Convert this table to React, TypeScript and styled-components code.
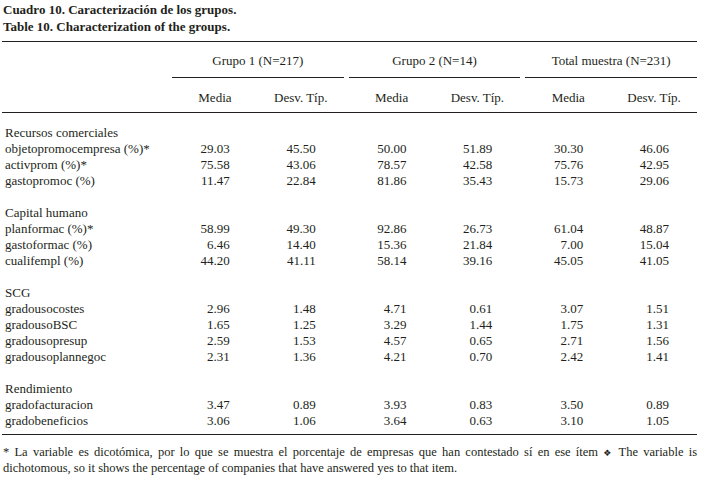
import React from "react";
import styled, { createGlobalStyle } from "styled-components";

const Global = createGlobalStyle`
  html, body { margin: 0; padding: 0; background: #ffffff; }
  body {
    font-family: "Liberation Serif", "Times New Roman", serif;
    color: #231f20;
  }
`;

const Page = styled.div`
  width: 701px;
  box-sizing: border-box;
  padding: 2px 4px 0 2px;
`;

const Title = styled.div`
  font-weight: bold;
  font-size: 13px;
  line-height: 16.5px;
  padding-left: 1px;
`;

const Table = styled.div`
  margin-top: 6px;
  border-top: 1px solid #231f20;
  border-bottom: 1px solid #231f20;
  font-size: 13px;
`;

const Row = styled.div<{ $rule?: boolean }>`
  display: grid;
  grid-template-columns: 165px repeat(3, 1fr);
  column-gap: 5px;
  border-bottom: ${(p) => (p.$rule ? "1px solid #231f20" : "none")};
`;

const GroupHead = styled.div`
  text-align: center;
  line-height: 16px;
  padding: 11px 0 8px;
  border-bottom: 1px solid #231f20;
`;

const Pair = styled.div`
  display: grid;
  grid-template-columns: 1fr 1fr;
`;

const SubHead = styled.div`
  text-align: center;
  line-height: 16px;
  padding: 12px 0 6px;
`;

const Body = styled.div`
  padding: 12px 0 5px;
`;

const Section = styled.div`
  & + & {
    margin-top: 16px;
  }
`;

const DataRow = styled.div`
  display: grid;
  grid-template-columns: 165px repeat(3, 1fr);
  column-gap: 5px;
  line-height: 16px;
`;

const Label = styled.div`
  padding-left: 3px;
  white-space: nowrap;
`;

const Num = styled.div`
  text-align: right;
  padding-right: 28px;
`;

const Foot = styled.div`
  font-size: 12.5px;
  line-height: 15px;
  padding: 10px 0 0 1px;
`;

const FootLine = styled.div<{ $full?: boolean }>`
  text-align: ${(p) => (p.$full ? "justify" : "left")};
  text-align-last: ${(p) => (p.$full ? "justify" : "auto")};
  white-space: nowrap;
`;

const Orn = styled.span`
  font-family: "DejaVu Sans", sans-serif;
  font-size: 9px;
`;

type Item = { name: string; v: string[] };
type Group = { title: string; items: Item[] };

const groups: Group[] = [
  {
    title: "Recursos comerciales",
    items: [
      { name: "objetopromocempresa (%)*", v: ["29.03", "45.50", "50.00", "51.89", "30.30", "46.06"] },
      { name: "activprom (%)*", v: ["75.58", "43.06", "78.57", "42.58", "75.76", "42.95"] },
      { name: "gastopromoc (%)", v: ["11.47", "22.84", "81.86", "35.43", "15.73", "29.06"] },
    ],
  },
  {
    title: "Capital humano",
    items: [
      { name: "planformac (%)*", v: ["58.99", "49.30", "92.86", "26.73", "61.04", "48.87"] },
      { name: "gastoformac (%)", v: ["6.46", "14.40", "15.36", "21.84", "7.00", "15.04"] },
      { name: "cualifempl (%)", v: ["44.20", "41.11", "58.14", "39.16", "45.05", "41.05"] },
    ],
  },
  {
    title: "SCG",
    items: [
      { name: "gradousocostes", v: ["2.96", "1.48", "4.71", "0.61", "3.07", "1.51"] },
      { name: "gradousoBSC", v: ["1.65", "1.25", "3.29", "1.44", "1.75", "1.31"] },
      { name: "gradousopresup", v: ["2.59", "1.53", "4.57", "0.65", "2.71", "1.56"] },
      { name: "gradousoplannegoc", v: ["2.31", "1.36", "4.21", "0.70", "2.42", "1.41"] },
    ],
  },
  {
    title: "Rendimiento",
    items: [
      { name: "gradofacturacion", v: ["3.47", "0.89", "3.93", "0.83", "3.50", "0.89"] },
      { name: "gradobeneficios", v: ["3.06", "1.06", "3.64", "0.63", "3.10", "1.05"] },
    ],
  },
];

const heads = ["Grupo 1 (N=217)", "Grupo 2 (N=14)", "Total muestra (N=231)"];

export default function App() {
  return (
    <Page>
      <Global />
      <Title>
        Cuadro 10. Caracterización de los grupos.
        <br />
        Table 10. Characterization of the groups.
      </Title>
      <Table>
        <Row>
          <div />
          {heads.map((h) => (
            <GroupHead key={h}>{h}</GroupHead>
          ))}
        </Row>
        <Row $rule>
          <div />
          {heads.map((h) => (
            <Pair key={h}>
              <SubHead>Media</SubHead>
              <SubHead>Desv. Típ.</SubHead>
            </Pair>
          ))}
        </Row>
        <Body>
          {groups.map((g) => (
            <Section key={g.title}>
              <DataRow>
                <Label>{g.title}</Label>
              </DataRow>
              {g.items.map((it) => (
                <DataRow key={it.name}>
                  <Label>{it.name}</Label>
                  {[0, 1, 2].map((k) => (
                    <Pair key={k}>
                      <Num>{it.v[k * 2]}</Num>
                      <Num>{it.v[k * 2 + 1]}</Num>
                    </Pair>
                  ))}
                </DataRow>
              ))}
            </Section>
          ))}
        </Body>
      </Table>
      <Foot>
        <FootLine $full>
          * La variable es dicotómica, por lo que se muestra el porcentaje de empresas que han contestado sí en ese ítem <Orn>❖</Orn> The variable is
        </FootLine>
        <FootLine>dichotomous, so it shows the percentage of companies that have answered yes to that item.</FootLine>
      </Foot>
    </Page>
  );
}
